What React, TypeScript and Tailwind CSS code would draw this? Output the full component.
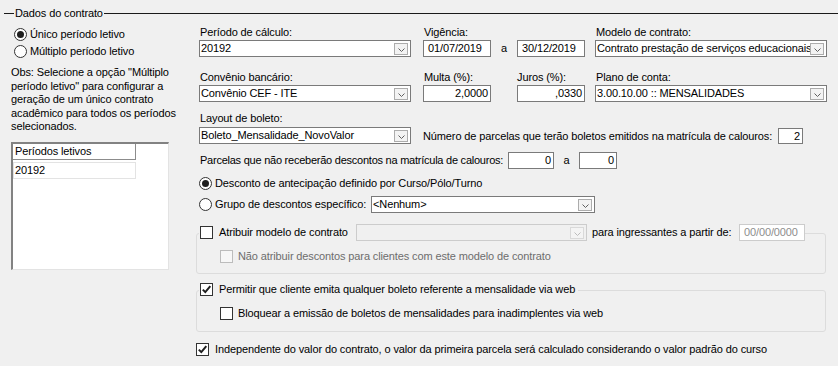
import React from "react";

const Chevron = ({ disabled }: { disabled?: boolean }) => (
  <svg width="7" height="4" viewBox="0 0 7 4">
    <path d="M0.5 0.5 L3.5 3.5 L6.5 0.5" fill="none" stroke={disabled ? "#bcbcbc" : "#606060"} strokeWidth="1" />
  </svg>
);

function ComboBox({ value, className, disabled }: { value?: string; className: string; disabled?: boolean }) {
  return (
    <div
      className={`flex h-[17px] flex-none items-center border ${
        disabled ? "border-[#cccccc] bg-[#f0f0f0]" : "border-[#7a7a7a] bg-white"
      } ${className}`}
    >
      <span className="flex-1 overflow-hidden whitespace-nowrap pl-[1px] leading-[15px]">{value}</span>
      <span
        className={`mr-[2px] flex h-[12px] w-[14px] flex-none items-end justify-center border pb-[2px] ${
          disabled ? "border-[#d9d9d9] bg-[#f4f4f4]" : "border-[#acacac] bg-[#f3f3f3]"
        }`}
      >
        <Chevron disabled={disabled} />
      </span>
    </div>
  );
}

function TextBox({
  value,
  className,
  right,
  disabled,
}: {
  value: string;
  className: string;
  right?: boolean;
  disabled?: boolean;
}) {
  return (
    <div
      className={`flex h-[17px] flex-none items-center border bg-white leading-[15px] ${
        right ? "justify-end pr-[2px]" : "pl-[4px]"
      } ${disabled ? "border-[#cccccc] text-[#8d8d8d]" : "border-[#7a7a7a]"} ${className}`}
    >
      {value}
    </div>
  );
}

function Radio({ checked }: { checked?: boolean }) {
  return (
    <span className="flex h-[13px] w-[13px] flex-none items-center justify-center rounded-full border border-[#333333] bg-white">
      {checked && <span className="h-[7px] w-[7px] rounded-full bg-[#1f1f1f]" />}
    </span>
  );
}

function Checkbox({ checked, disabled }: { checked?: boolean; disabled?: boolean }) {
  return (
    <span
      className={`flex h-[13px] w-[13px] flex-none items-center justify-center border ${
        disabled ? "border-[#bcbcbc] bg-[#f7f7f7]" : "border-[#333333] bg-white"
      }`}
    >
      {checked && (
        <svg width="11" height="11" viewBox="0 0 11 11">
          <path d="M1.8 5.6 L4.3 8.1 L9.3 2.2" fill="none" stroke="#1f1f1f" strokeWidth="2" />
        </svg>
      )}
    </span>
  );
}

const Label = ({ children, className = "" }: { children: React.ReactNode; className?: string }) => (
  <div className={`h-[14px] whitespace-nowrap leading-[14px] ${className}`}>{children}</div>
);

export default function App() {
  return (
    <div className="h-[366px] w-[838px] overflow-hidden bg-[#f0f0f0] font-['Liberation_Sans',Arial,sans-serif] text-[11px] tracking-[-0.12px] text-black">
      {/* legenda do grupo */}
      <div className="mt-[6px] flex h-[14px] items-center">
        <div className="ml-[4px] w-[10px] border-t border-[#1a1a1a]" />
        <span className="px-[1px] leading-[14px]">Dados do contrato</span>
        <div className="flex-1 border-t border-[#1a1a1a]" />
      </div>

      <div className="flex">
        {/* coluna esquerda */}
        <div className="w-[196px] flex-none">
          <div className="mt-[6px] flex h-[16px] items-center pl-[14px]">
            <Radio checked />
            <span className="ml-[3px]">Único período letivo</span>
          </div>
          <div className="mt-[1px] flex h-[16px] items-center pl-[14px]">
            <Radio />
            <span className="ml-[3px]">Múltiplo período letivo</span>
          </div>
          <p className="mt-[7px] pl-[11px] leading-[13.5px]">
            Obs: Selecione a opção "Múltiplo
            <br />
            período letivo" para configurar a
            <br />
            geração de um único contrato
            <br />
            acadêmico para todos os períodos
            <br />
            selecionados.
          </p>
          <div className="ml-[11px] mt-[8px] h-[128px] w-[158px] border-b border-l-2 border-r border-t-2 border-b-[#e3e3e3] border-l-[#828282] border-r-[#e3e3e3] border-t-[#828282] bg-white">
            <div className="h-[16px] w-[123px] border-b border-r border-[#8c8c8c] pl-[2px] leading-[15px]">
              Períodos letivos
            </div>
            <div className="mt-[2px] h-[17px] w-[123px] border border-[#e3e3e3] pl-[1px] leading-[15px]">20192</div>
          </div>
        </div>

        {/* coluna direita */}
        <div className="flex-1">
          <div className="ml-[3px] mt-[5px] flex">
            <div className="flex w-[212px] flex-col gap-[1px]">
              <Label className="pl-[1px]">Período de cálculo:</Label>
              <ComboBox value="20192" className="w-[212px]" />
            </div>
            <div className="ml-[12px] flex w-[68px] flex-col gap-[1px]">
              <Label className="pl-[1px]">Vigência:</Label>
              <TextBox value="01/07/2019" className="w-[68px]" />
            </div>
            <div className="flex h-[32px] w-[26px] items-end justify-center pb-[1px] leading-[15px]">a</div>
            <div className="flex w-[68px] flex-col gap-[1px]">
              <Label>&nbsp;</Label>
              <TextBox value="30/12/2019" className="w-[68px]" />
            </div>
            <div className="ml-[10px] flex w-[232px] flex-col gap-[1px]">
              <Label className="pl-[1px]">Modelo de contrato:</Label>
              <ComboBox value="Contrato prestação de serviços educacionais" className="w-[232px]" />
            </div>
          </div>

          <div className="ml-[3px] mt-[13px] flex">
            <div className="flex w-[212px] flex-col gap-[1px]">
              <Label className="pl-[1px]">Convênio bancário:</Label>
              <ComboBox value="Convênio CEF - ITE" className="w-[212px]" />
            </div>
            <div className="ml-[12px] flex w-[68px] flex-col gap-[1px]">
              <Label className="pl-[1px]">Multa (%):</Label>
              <TextBox value="2,0000" right className="w-[68px]" />
            </div>
            <div className="w-[26px]" />
            <div className="flex w-[68px] flex-col gap-[1px]">
              <Label>Juros (%):</Label>
              <TextBox value=",0330" right className="w-[68px]" />
            </div>
            <div className="ml-[10px] flex w-[232px] flex-col gap-[1px]">
              <Label className="pl-[1px]">Plano de conta:</Label>
              <ComboBox value="3.00.10.00 :: MENSALIDADES" className="w-[232px]" />
            </div>
          </div>

          <div className="ml-[3px] mt-[9px] flex items-end">
            <div className="flex w-[212px] flex-col gap-[2px]">
              <Label className="pl-[1px]">Layout de boleto:</Label>
              <ComboBox value="Boleto_Mensalidade_NovoValor" className="w-[212px]" />
            </div>
            <div className="ml-[12px] flex h-[16px] w-[355px] items-center whitespace-nowrap">
              Número de parcelas que terão boletos emitidos na matrícula de calouros:
            </div>
            <TextBox value="2" right className="!h-[16px] w-[25px]" />
          </div>

          <div className="mt-[8px] flex h-[17px] items-center">
            <span className="w-[312px] flex-none whitespace-nowrap pl-[4px] tracking-[-0.24px]">
              Parcelas que não receberão descontos na matrícula de calouros:
            </span>
            <TextBox value="0" right className="w-[46px]" />
            <span className="w-[25px] flex-none text-center">a</span>
            <TextBox value="0" right className="w-[38px]" />
          </div>

          <div className="ml-[3px] mt-[6px] flex h-[16px] items-center">
            <Radio checked />
            <span className="ml-[3px]">Desconto de antecipação definido por Curso/Pólo/Turno</span>
          </div>

          <div className="ml-[3px] mt-[5px] flex h-[17px] items-center">
            <Radio />
            <span className="ml-[3px] w-[156px] flex-none whitespace-nowrap">Grupo de descontos específico:</span>
            <ComboBox value="<Nenhum>" className="w-[224px]" />
          </div>

          {/* grupo: atribuir modelo */}
          <div className="mt-[20px] h-[41px] w-[630px] rounded-[3px] border border-[#dcdcdc]">
            <div className="-mt-[10px] ml-[2px] flex h-[17px] w-fit items-center bg-[#f0f0f0] pl-[1px]">
              <Checkbox />
              <span className="ml-[6px] w-[137px] flex-none whitespace-nowrap">Atribuir modelo de contrato</span>
              <ComboBox disabled className="w-[231px]" />
              <span className="ml-[5px] w-[147px] flex-none whitespace-nowrap">para ingressantes a partir de:</span>
              <TextBox value="00/00/0000" disabled className="w-[66px]" />
            </div>
            <div className="ml-[23px] mt-[8px] flex h-[14px] items-center">
              <Checkbox disabled />
              <span className="ml-[5px] text-[#6d6d6d]">Não atribuir descontos para clientes com este modelo de contrato</span>
            </div>
          </div>

          {/* grupo: boleto via web */}
          <div className="mt-[16px] h-[42px] w-[630px] rounded-[3px] border border-[#dcdcdc]">
            <div className="-mt-[10px] ml-[2px] flex h-[17px] w-fit items-center bg-[#f0f0f0] pl-[1px] pr-[3px]">
              <Checkbox checked />
              <span className="ml-[6px] whitespace-nowrap">
                Permitir que cliente emita qualquer boleto referente a mensalidade via web
              </span>
            </div>
            <div className="ml-[23px] mt-[8px] flex h-[14px] items-center">
              <Checkbox />
              <span className="ml-[5px]">Bloquear a emissão de boletos de mensalidades para inadimplentes via web</span>
            </div>
          </div>

          <div className="mt-[10px] flex h-[14px] items-center">
            <Checkbox checked />
            <span className="ml-[6px] whitespace-nowrap">
              Independente do valor do contrato, o valor da primeira parcela será calculado considerando o valor padrão
              do curso
            </span>
          </div>
        </div>
      </div>
    </div>
  );
}
